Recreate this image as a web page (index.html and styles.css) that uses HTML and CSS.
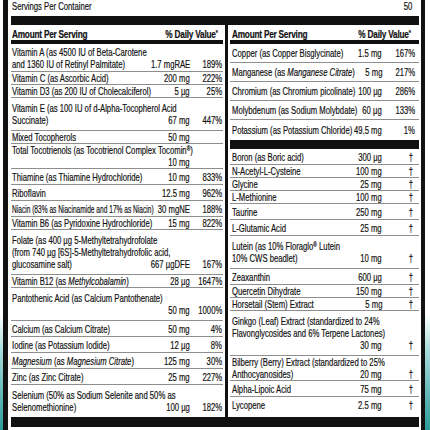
FILE: index.html
```html
<!DOCTYPE html>
<html lang="en">
<head>
  <meta charset="UTF-8">
  <title>Supplement Facts</title>
  <link rel="stylesheet" href="styles.css">
</head>
<body>

  <div class="label">
    <!-- Porção -->
    <div class="serving">
      <div class="serving-row"><span>Serving Size</span><span>2 Caps</span></div>
      <div class="serving-row"><span>Servings Per Container</span><span>50</span></div>
    </div>
    <div class="bar"></div>

    <div class="facts">
      <!-- Coluna esquerda -->
      <div class="col col-left">
        <div class="head"><span>Amount Per Serving</span><span>% Daily Value<sup>*</sup></span></div>
        <div class="row"><span class="name">Vitamin A (as 4500 IU of Beta-Carotene<br>and 1360 IU of Retinyl Palmitate)</span><span class="amt">1.7 mgRAE</span><span class="dv">189%</span></div>
        <div class="row tight"><span class="name">Vitamin C (as Ascorbic Acid)</span><span class="amt">200 mg</span><span class="dv">222%</span></div>
        <div class="row tight"><span class="name">Vitamin D3 (as 200 IU of Cholecalciferol)</span><span class="amt">5 µg</span><span class="dv">25%</span></div>
        <div class="row loose"><span class="name">Vitamin E (as 100 IU of d-Alpha-Tocopherol Acid<br>Succinate)</span><span class="amt">67 mg</span><span class="dv">447%</span></div>
        <div class="row tight"><span class="name">Mixed Tocopherols</span><span class="amt">50 mg</span><span class="dv"></span></div>
        <div class="row tight split"><span class="name">Total Tocotrienols (as Tocotrienol Complex Tocomin<sup>®</sup>)</span><span class="amt">10 mg</span><span class="dv"></span></div>
        <div class="row"><span class="name">Thiamine (as Thiamine Hydrochloride)</span><span class="amt">10 mg</span><span class="dv">833%</span></div>
        <div class="row"><span class="name">Riboflavin</span><span class="amt">12.5 mg</span><span class="dv">962%</span></div>
        <div class="row cramped"><span class="name">Niacin (83% as Niacinamide and 17% as Niacin)</span><span class="amt">30 mgNE</span><span class="dv">188%</span></div>
        <div class="row tight"><span class="name">Vitamin B6 (as Pyridoxine Hydrochloride)</span><span class="amt">15 mg</span><span class="dv">822%</span></div>
        <div class="row loose"><span class="name">Folate (as 400 µg 5-Methyltetrahydrofolate<br>(from 740 µg [6S]-5-Methyltetrahydrofolic acid,<br>glucosamine salt)</span><span class="amt">667 µgDFE</span><span class="dv">167%</span></div>
        <div class="row tight"><span class="name">Vitamin B12 (as <i>Methylcobalamin</i>)</span><span class="amt">28 µg</span><span class="dv">1647%</span></div>
        <div class="row loose split"><span class="name">Pantothenic Acid (as Calcium Pantothenate)</span><span class="amt">50 mg</span><span class="dv">1000%</span></div>
        <div class="row"><span class="name">Calcium (as Calcium Citrate)</span><span class="amt">50 mg</span><span class="dv">4%</span></div>
        <div class="row"><span class="name">Iodine (as Potassium Iodide)</span><span class="amt">12 µg</span><span class="dv">8%</span></div>
        <div class="row"><span class="name"><i>Magnesium</i> (as <i>Magnesium Citrate</i>)</span><span class="amt">125 mg</span><span class="dv">30%</span></div>
        <div class="row"><span class="name">Zinc (as Zinc Citrate)</span><span class="amt">25 mg</span><span class="dv">227%</span></div>
        <div class="row loose"><span class="name">Selenium (50% as Sodium Selenite and 50% as<br>Selenomethionine)</span><span class="amt">100 µg</span><span class="dv">182%</span></div>
      </div>

      <!-- Coluna direita -->
      <div class="col col-right">
        <div class="head"><span>Amount Per Serving</span><span>% Daily Value<sup>*</sup></span></div>
        <div class="row roomy"><span class="name">Copper (as Copper Bisglycinate)</span><span class="amt">1.5 mg</span><span class="dv">167%</span></div>
        <div class="row roomy"><span class="name">Manganese (as <i>Manganese Citrate</i>)</span><span class="amt">5 mg</span><span class="dv">217%</span></div>
        <div class="row roomy"><span class="name">Chromium (as Chromium picolinate)</span><span class="amt">100 µg</span><span class="dv">286%</span></div>
        <div class="row roomy"><span class="name">Molybdenum (as Sodium Molybdate)</span><span class="amt">60 µg</span><span class="dv">133%</span></div>
        <div class="row loose last"><span class="name">Potassium (as Potassium Chloride)</span><span class="amt">49.5 mg</span><span class="dv">1%</span></div>
        <div class="bar"></div>
        <div class="row"><span class="name">Boron (as Boric acid)</span><span class="amt">300 µg</span><span class="dv dag">†</span></div>
        <div class="row tight"><span class="name">N-Acetyl-L-Cysteine</span><span class="amt">100 mg</span><span class="dv dag">†</span></div>
        <div class="row tight"><span class="name">Glycine</span><span class="amt">25 mg</span><span class="dv dag">†</span></div>
        <div class="row tight"><span class="name">L-Methionine</span><span class="amt">100 mg</span><span class="dv dag">†</span></div>
        <div class="row"><span class="name">Taurine</span><span class="amt">250 mg</span><span class="dv dag">†</span></div>
        <div class="row"><span class="name">L-Glutamic Acid</span><span class="amt">25 mg</span><span class="dv dag">†</span></div>
        <div class="row loose"><span class="name">Lutein (as 10% Floraglo<sup>®</sup> Lutein<br>10% CWS beadlet)</span><span class="amt">10 mg</span><span class="dv dag">†</span></div>
        <div class="row"><span class="name">Zeaxanthin</span><span class="amt">600 µg</span><span class="dv dag">†</span></div>
        <div class="row tight"><span class="name">Quercetin Dihydrate</span><span class="amt">150 mg</span><span class="dv dag">†</span></div>
        <div class="row tight"><span class="name">Horsetail (Stem) Extract</span><span class="amt">5 mg</span><span class="dv dag">†</span></div>
        <div class="row loose split"><span class="name">Ginkgo (Leaf) Extract (standardized to 24%<br>Flavonglycosides and 6% Terpene Lactones)</span><span class="amt">30 mg</span><span class="dv dag">†</span></div>
        <div class="row tight"><span class="name">Bilberry (Berry) Extract (standardized to 25%<br>Anthocyanosides)</span><span class="amt">20 mg</span><span class="dv dag">†</span></div>
        <div class="row"><span class="name">Alpha-Lipoic Acid</span><span class="amt">75 mg</span><span class="dv dag">†</span></div>
        <div class="row"><span class="name">Lycopene</span><span class="amt">2.5 mg</span><span class="dv dag">†</span></div>
      </div>
    </div>

    <div class="bar bar-bottom"></div>
    <div class="notes">
      <span>† Daily Value not established.</span>
      <span>* Percent Daily Values are based on a 2,000 calorie diet.</span>
    </div>
  </div>

</body>
</html>
```

FILE: styles.css
```css
html {
  height: 100%;
  overflow: hidden;
  background: linear-gradient(to bottom, #fff 0, #fff 315px, #a9dcdc 350px, #2b9a9a 430px);
}

body {
  font-family: "Liberation Sans", Arial, sans-serif;
  font-size: 11px;
  line-height: 12px;
  color: #111;
  -webkit-text-stroke: 0.2px #111;
  margin: 0;
  padding: 0;
}

.label {
  margin: 0 5px 0 3px;
  background: #fff;
  border-left: 5px solid #111;
  border-right: 4px solid #111;
  padding: 0 2px 0 3px;
}

/* texto condensado, como no rótulo */
.name,
.amt,
.dv,
.serving-row span,
.notes span {
  transform: scaleX(0.7);
  white-space: nowrap;
}

.name,
.notes span,
.serving-row span:first-child,
.head span:first-child {
  transform-origin: left center;
  justify-self: start;
}

.amt,
.dv,
.serving-row span:last-child,
.head span:last-child {
  transform-origin: right center;
  justify-self: end;
}

.cramped .name {
  transform: scaleX(0.6);
}

.serving {
  margin-top: -12px;
  margin-bottom: 4px;
}

.serving-row {
  display: flex;
  justify-content: space-between;
  padding: 0 7px 0 1px;
}

.bar {
  height: 9px;
  background: #111;
}

.bar-bottom {
  height: 10px;
}

.facts {
  display: grid;
  grid-template-columns: 212px 1fr;
}

.col-right {
  margin-left: 2px;
  border-left: 3px solid #111;
  padding-left: 2px;
}

.head {
  display: flex;
  justify-content: space-between;
  font-weight: bold;
  letter-spacing: -0.3px;
  white-space: nowrap;
  padding: 3px 6px 0 1px;
  border-bottom: 4px solid #111;
}

.head span {
  transform: scaleX(0.75);
  flex-shrink: 0;
}

.col-right .head {
  padding: 3px 9px 0 2px;
}

sup {
  font-size: 7px;
  line-height: 0;
  vertical-align: 3px;
}

.row {
  display: grid;
  grid-template-columns: minmax(0, 1fr) auto 32px;
  align-items: end;
  padding: 2px 1px 1px 1px;
  border-bottom: 1px solid #8e8e8e;
}

.col-right .row {
  grid-template-columns: minmax(0, 1fr) auto 33px;
  padding-left: 2px;
  padding-right: 4px;
}

.row.tight {
  padding-top: 0;
  padding-bottom: 0;
}

.row.loose {
  padding-top: 4px;
  padding-bottom: 4px;
}

.row.roomy {
  padding-top: 3px;
  padding-bottom: 3px;
}

.row:last-child,
.row.last {
  border-bottom: none;
}

.split .name {
  grid-column: 1 / -1;
}

.split .amt {
  grid-column: 2;
}

.dag {
  margin-right: 2px;
}

.notes {
  display: grid;
  grid-template-columns: 217px 1fr;
  padding: 2px 0 0 4px;
}
```
